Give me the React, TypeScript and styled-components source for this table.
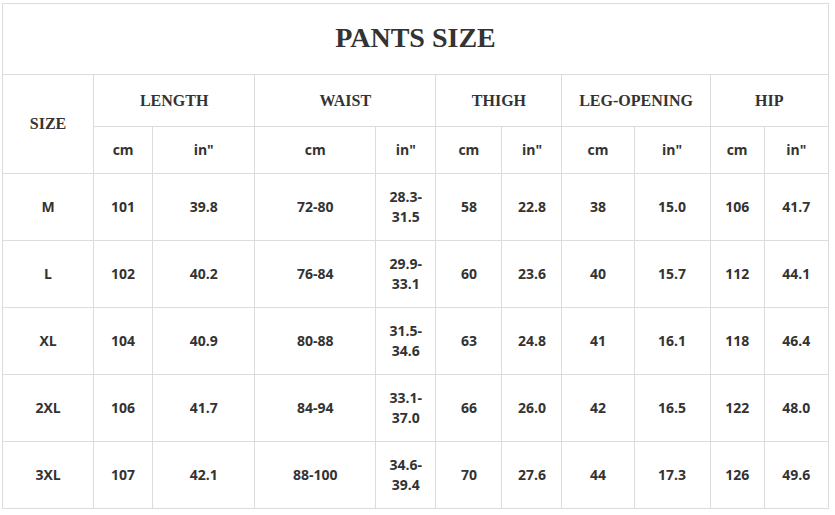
import styled, { createGlobalStyle } from 'styled-components';

const GlobalStyle = createGlobalStyle`
  html, body {
    margin: 0;
    padding: 0;
    background: #ffffff;
  }
`;

const Page = styled.div`
  padding: 3px 0 0 2px;
  background: #ffffff;
`;

const Table = styled.table`
  width: 827px;
  table-layout: fixed;
  border-collapse: collapse;
  color: #333333;
`;

const Col = styled.col<{ $w: number }>`
  width: ${(p) => p.$w}px;
`;

const Row = styled.tr<{ $h: number }>`
  height: ${(p) => p.$h}px;
`;

const Cell = styled.td`
  border: 1px solid #dcdcdc;
  padding: 0;
  text-align: center;
  vertical-align: middle;
  font-family: "Open Sans", "Liberation Sans", sans-serif;
  font-weight: 700;
  font-size: 14px;
  line-height: 20px;
`;

const TitleCell = styled(Cell)`
  font-family: "Liberation Serif", "Times New Roman", serif;
  font-size: 28px;
  line-height: 32px;
  padding-bottom: 3px;
`;

const HeadCell = styled(Cell)`
  font-family: "Liberation Serif", "Times New Roman", serif;
  font-size: 16px;
`;

const Line = styled.span`
  display: block;
`;

const widths = [91, 59, 102, 121, 60, 66, 60, 72, 76, 54, 64];
const groups = ['LENGTH', 'WAIST', 'THIGH', 'LEG-OPENING', 'HIP'];

const rows: string[][] = [
  ['M', '101', '39.8', '72-80', '28.3-|31.5', '58', '22.8', '38', '15.0', '106', '41.7'],
  ['L', '102', '40.2', '76-84', '29.9-|33.1', '60', '23.6', '40', '15.7', '112', '44.1'],
  ['XL', '104', '40.9', '80-88', '31.5-|34.6', '63', '24.8', '41', '16.1', '118', '46.4'],
  ['2XL', '106', '41.7', '84-94', '33.1-|37.0', '66', '26.0', '42', '16.5', '122', '48.0'],
  ['3XL', '107', '42.1', '88-100', '34.6-|39.4', '70', '27.6', '44', '17.3', '126', '49.6'],
];

function Value({ text }: { text: string }) {
  if (!text.includes('|')) return <>{text}</>;
  return (
    <>
      {text.split('|').map((t) => (
        <Line key={t}>{t}</Line>
      ))}
    </>
  );
}

export default function App() {
  return (
    <Page>
      <GlobalStyle />
      <Table>
        <colgroup>
          {widths.map((w, i) => (
            <Col key={i} $w={w} />
          ))}
        </colgroup>
        <tbody>
          <Row $h={71}>
            <TitleCell colSpan={11}>PANTS SIZE</TitleCell>
          </Row>
          <Row $h={52}>
            <HeadCell rowSpan={2}>SIZE</HeadCell>
            {groups.map((g) => (
              <HeadCell key={g} colSpan={2}>
                {g}
              </HeadCell>
            ))}
          </Row>
          <Row $h={47}>
            {groups.map((g) => [
              <Cell key={g + 'cm'}>cm</Cell>,
              <Cell key={g + 'in'}>in"</Cell>,
            ])}
          </Row>
          {rows.map((r) => (
            <Row key={r[0]} $h={67}>
              {r.map((v, i) => (
                <Cell key={i}>
                  <Value text={v} />
                </Cell>
              ))}
            </Row>
          ))}
        </tbody>
      </Table>
    </Page>
  );
}
